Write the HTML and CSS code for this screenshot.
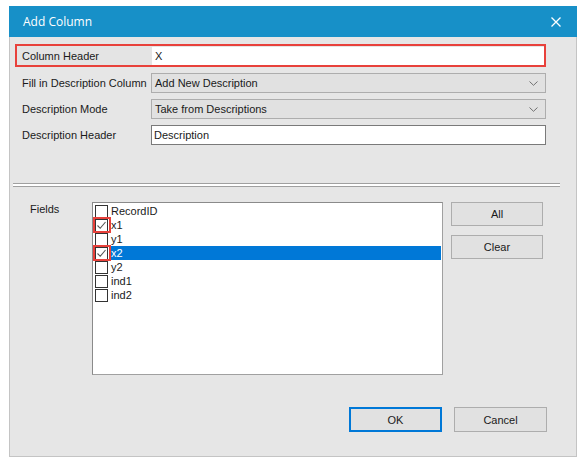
FILE: index.html
```html
<!DOCTYPE html>
<html>
<head>
<meta charset="utf-8">
<link rel="stylesheet" href="styles.css">
</head>
<body>
<div class="window">
  <div class="titlebar">
    <span class="title">Add Column</span>
    <svg class="close" width="10" height="10" viewBox="0 0 10 10"><path d="M0.5 0.5 L9.5 9.5 M9.5 0.5 L0.5 9.5" stroke="#fff" stroke-width="1.3" fill="none"/></svg>
  </div>
  <div class="form">
    <div class="row hl">
      <div class="label">Column Header</div>
      <div class="field input">X</div>
    </div>
    <div class="row">
      <div class="label">Fill in Description Column</div>
      <div class="field select"><span>Add New Description</span>
        <svg class="chev" width="9" height="5" viewBox="0 0 9 5"><path d="M0.5 0.5 L4.5 4.3 L8.5 0.5" stroke="#707070" stroke-width="1" fill="none"/></svg></div>
    </div>
    <div class="row">
      <div class="label">Description Mode</div>
      <div class="field select"><span>Take from Descriptions</span>
        <svg class="chev" width="9" height="5" viewBox="0 0 9 5"><path d="M0.5 0.5 L4.5 4.3 L8.5 0.5" stroke="#707070" stroke-width="1" fill="none"/></svg></div>
    </div>
    <div class="row">
      <div class="label">Description Header</div>
      <div class="field input bordered">Description</div>
    </div>
  </div>
  <div class="separator"></div>
  <div class="fields">
    <div class="fields-label">Fields</div>
    <div class="list">
      <div class="item"><span class="cb"></span><span class="txt">RecordID</span></div>
      <div class="item"><span class="cb checked"><svg width="11" height="11" viewBox="0 0 11 11"><path d="M1.5 5.5 L4.2 8.3 L9.5 2" stroke="#555" stroke-width="1.1" fill="none"/></svg></span><span class="txt">x1</span><span class="mark"></span></div>
      <div class="item"><span class="cb"></span><span class="txt">y1</span></div>
      <div class="item selected"><span class="cb checked"><svg width="11" height="11" viewBox="0 0 11 11"><path d="M1.5 5.5 L4.2 8.3 L9.5 2" stroke="#555" stroke-width="1.1" fill="none"/></svg></span><span class="txt">x2</span><span class="mark"></span></div>
      <div class="item"><span class="cb"></span><span class="txt">y2</span></div>
      <div class="item"><span class="cb"></span><span class="txt">ind1</span></div>
      <div class="item"><span class="cb"></span><span class="txt">ind2</span></div>
    </div>
    <div class="side-buttons">
      <div class="btn">All</div>
      <div class="btn">Clear</div>
    </div>
  </div>
  <div class="footer">
    <div class="btn wide default">OK</div>
    <div class="btn wide">Cancel</div>
  </div>
</div>
</body>
</html>
```

FILE: styles.css
```css
* { box-sizing: border-box; }
html, body { margin: 0; padding: 0; background: #ffffff; }
body {
  padding: 6px 0 0 9px;
  font-family: "Liberation Sans", Arial, sans-serif;
  font-size: 11px;
  color: #1a1a1a;
}
.window {
  width: 568px;
  height: 451px;
  border: 1px solid #c4c4c4;
  border-top: none;
  background: #e6e6e6;
  display: flex;
  flex-direction: column;
}
.titlebar {
  height: 31px;
  margin: 0 -1px;
  background: #1790c8;
  display: flex;
  align-items: center;
  justify-content: space-between;
  padding: 0 16px 0 14px;
}
.title {
  font-family: "Open Sans", "Noto Sans", sans-serif;
  font-size: 12px;
  color: #ffffff;
  padding-bottom: 1px;
}
.close { display: block; }
.form {
  padding: 7px 30px 0 5px;
  display: flex;
  flex-direction: column;
  gap: 6px;
}
.row {
  display: flex;
  align-items: center;
  height: 20px;
}
.row .label {
  width: 136px;
  padding-left: 7px;
  white-space: nowrap;
}
.row .field {
  flex: 1;
  height: 20px;
  display: flex;
  align-items: center;
  padding-left: 3px;
}
.row.hl {
  height: 23px;
  border: 2px solid #e8413b;
}
.row.hl .label {
  width: 135px;
  padding-left: 5px;
  height: 19px;
  display: flex;
  align-items: center;
  background: #e4e4e4;
}
.row.hl .field {
  height: 18px;
  margin-top: 1px;
  background: #ffffff;
  padding-left: 3px;
}
.input { background: #ffffff; }
.input.bordered { border: 1px solid #7a7a7a; padding-left: 2px; }
.select {
  background: #e1e1e1;
  border: 1px solid #adadad;
  justify-content: space-between;
  padding-right: 7px;
}
.chev { display: block; margin-top: 1px; }
.separator {
  margin: 38px 16px 0 3px;
  height: 4px;
  border-top: 1px solid #a0a0a0;
  border-bottom: 1px solid #a0a0a0;
  background: #ffffff;
}
.fields {
  margin-top: 15px;
  display: flex;
  align-items: flex-start;
}
.fields-label {
  width: 82px;
  padding-left: 20px;
  padding-top: 1px;
}
.list {
  width: 351px;
  height: 173px;
  background: #ffffff;
  border: 1px solid #a0a0a0;
  border-top-color: #8a8a8a;
  border-left-color: #8a8a8a;
  padding: 1px 1px 0 2px;
}
.item {
  position: relative;
  height: 14px;
  display: flex;
  align-items: center;
}
.cb {
  width: 13px;
  height: 13px;
  border: 1px solid #333333;
  background: #ffffff;
  display: flex;
  align-items: center;
  justify-content: center;
  flex: none;
}
.cb svg { display: block; }
.txt {
  padding-left: 3px;
  height: 14px;
  line-height: 14px;
  flex: 1;
}
.selected .txt {
  background: #0078d7;
  color: #ffffff;
  margin-left: 1px;
  padding-left: 2px;
}
.mark {
  position: absolute;
  left: -2px;
  top: -1px;
  width: 18px;
  height: 16px;
  border: 2px solid #e8413b;
}
.side-buttons {
  margin-left: 8px;
  display: flex;
  flex-direction: column;
  gap: 9px;
}
.btn {
  width: 92px;
  height: 24px;
  background: #e1e1e1;
  border: 1px solid #adadad;
  display: flex;
  align-items: center;
  justify-content: center;
}
.footer {
  margin-top: 32px;
  display: flex;
  justify-content: flex-end;
  gap: 12px;
  padding-right: 29px;
}
.btn.wide { width: 93px; height: 25px; }
.btn.default { border: 2px solid #0078d7; }
```
